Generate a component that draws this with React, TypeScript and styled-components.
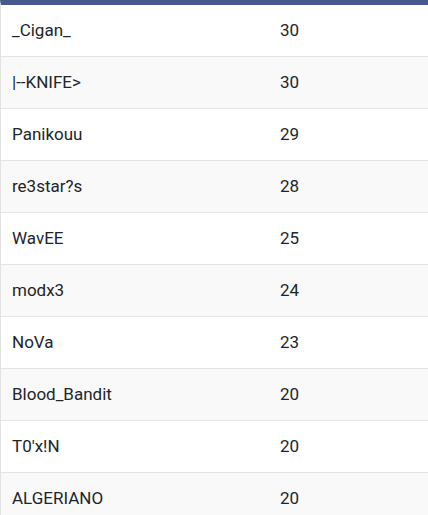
import styled, { createGlobalStyle } from "styled-components";

const GlobalStyle = createGlobalStyle`
  body {
    margin: 0;
    background: #ffffff;
    font-family: Roboto, "Liberation Sans", sans-serif;
  }
`;

const players = [
  { name: "_Cigan_", score: 30 },
  { name: "|--KNIFE>", score: 30 },
  { name: "Panikouu", score: 29 },
  { name: "re3star?s", score: 28 },
  { name: "WavEE", score: 25 },
  { name: "modx3", score: 24 },
  { name: "NoVa", score: 23 },
  { name: "Blood_Bandit", score: 20 },
  { name: "T0'x!N", score: 20 },
  { name: "ALGERIANO", score: 20 },
];

const Board = styled.div`
  border-left: 1px solid #e2e2e2;
  border-top: 5px solid #47598a;
  width: 100%;
  box-sizing: border-box;
`;

const Row = styled.div<{ $striped: boolean }>`
  display: grid;
  grid-template-columns: 267px 1fr;
  height: 51px;
  box-sizing: border-box;
  height: 52px;
  padding-bottom: 2px;
  align-items: center;
  border-bottom: 1px solid #e4e4e4;
  background: ${(p) => (p.$striped ? "#f9f9f9" : "#ffffff")};
`;

const Cell = styled.div`
  padding: 0 11px;
  font-size: 17px;
  color: #212529;
  white-space: nowrap;
`;

const ScoreCell = styled(Cell)`
  padding-left: 12px;
`;

const App = () => {
  return (
    <>
      <GlobalStyle />
      <Board>
        {players.map((p, n) => (
          <Row key={n} $striped={n % 2 === 1}>
            <Cell>{p.name}</Cell>
            <ScoreCell>{p.score}</ScoreCell>
          </Row>
        ))}
      </Board>
    </>
  );
};
export default App;
